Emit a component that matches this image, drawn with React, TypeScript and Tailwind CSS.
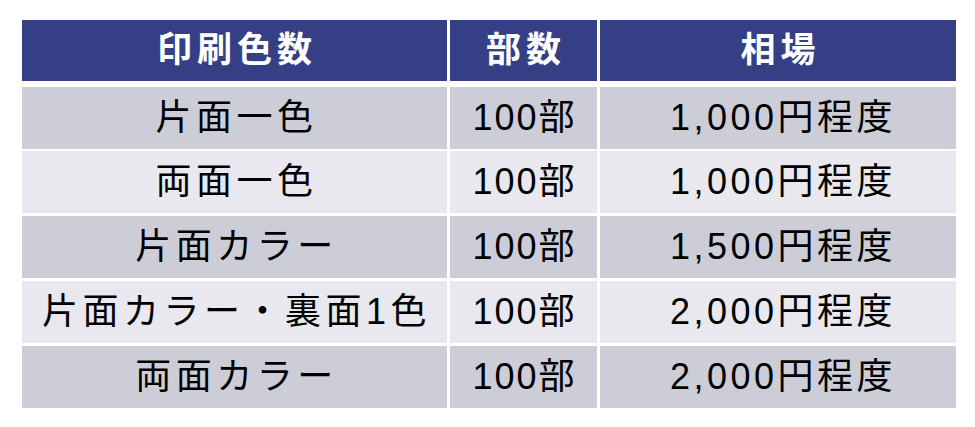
import React from "react";

const rows: [string, string, string][] = [
  ["片面一色", "100部", "1,000円程度"],
  ["両面一色", "100部", "1,000円程度"],
  ["片面カラー", "100部", "1,500円程度"],
  ["片面カラー・裏面1色", "100部", "2,000円程度"],
  ["両面カラー", "100部", "2,000円程度"],
];

const font = { fontFamily: '"Liberation Sans", "Noto Sans CJK JP", sans-serif' };

const track = ["tracking-[4.5px] pl-[4px]", "tracking-[2px] pl-[2px]", "tracking-[3.5px] pl-[10px]"];

export default function App() {
  return (
    <div className="w-[975px] h-[427px] bg-white pt-[20px] pl-[22px]" style={font}>
      <div className="w-[934px] flex flex-col">
        <div className="grid grid-cols-[425px_147px_356px] gap-x-[3px] h-[61px]">
          {["印刷色数", "部数", "相場"].map((h) => (
            <div
              key={h}
              className="bg-[#353f86] text-white font-bold text-[35px] tracking-[5px] pl-[5px] flex items-center justify-center"
            >
              {h}
            </div>
          ))}
        </div>
        {rows.map((r, i) => (
          <div
            key={i}
            className={`grid grid-cols-[425px_147px_356px] gap-x-[3px] h-[62px] ${
              i === 0 ? "mt-[6px]" : i === 1 ? "mt-[2px]" : "mt-[3px]"
            }`}
          >
            {r.map((c, j) => (
              <div
                key={j}
                className={`${
                  i % 2 === 0 ? "bg-[#cdcdd8]" : "bg-[#e8e8ee]"
                } text-black text-[36px] ${track[j]} flex items-center justify-center`}
              >
                {c}
              </div>
            ))}
          </div>
        ))}
      </div>
    </div>
  );
}
